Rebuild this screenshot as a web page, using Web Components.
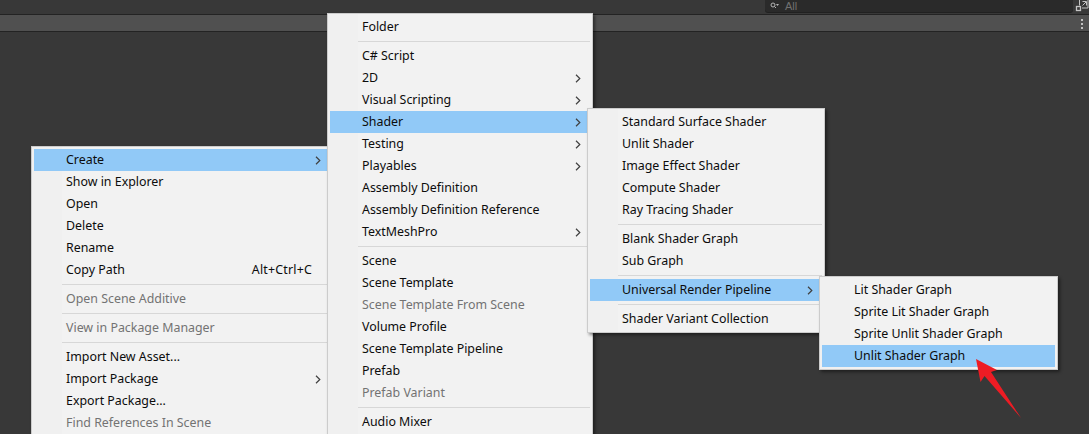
<!DOCTYPE html>
<html>
<head>
<meta charset="utf-8">
<style>
  html, body { margin: 0; height: 100%; background: #383838; overflow: hidden; }
  body { font-family: "Noto Sans", "Liberation Sans", sans-serif; }
</style>
</head>
<body>
<editor-bar></editor-bar>

<context-menu style="left:31px;top:146px;width:302px;z-index:1">
  <menu-row arrow active>Create</menu-row>
  <menu-row>Show in Explorer</menu-row>
  <menu-row>Open</menu-row>
  <menu-row>Delete</menu-row>
  <menu-row>Rename</menu-row>
  <menu-row key="Alt+Ctrl+C">Copy Path</menu-row>
  <menu-sep></menu-sep>
  <menu-row off>Open Scene Additive</menu-row>
  <menu-sep></menu-sep>
  <menu-row off>View in Package Manager</menu-row>
  <menu-sep></menu-sep>
  <menu-row>Import New Asset...</menu-row>
  <menu-row arrow>Import Package</menu-row>
  <menu-row>Export Package...</menu-row>
  <menu-row off>Find References In Scene</menu-row>
</context-menu>

<context-menu style="left:327px;top:13px;width:266px;z-index:2">
  <menu-row>Folder</menu-row>
  <menu-sep></menu-sep>
  <menu-row>C# Script</menu-row>
  <menu-row arrow>2D</menu-row>
  <menu-row arrow>Visual Scripting</menu-row>
  <menu-row arrow active>Shader</menu-row>
  <menu-row arrow>Testing</menu-row>
  <menu-row arrow>Playables</menu-row>
  <menu-row>Assembly Definition</menu-row>
  <menu-row>Assembly Definition Reference</menu-row>
  <menu-row arrow>TextMeshPro</menu-row>
  <menu-sep></menu-sep>
  <menu-row>Scene</menu-row>
  <menu-row>Scene Template</menu-row>
  <menu-row off>Scene Template From Scene</menu-row>
  <menu-row>Volume Profile</menu-row>
  <menu-row>Scene Template Pipeline</menu-row>
  <menu-row>Prefab</menu-row>
  <menu-row off>Prefab Variant</menu-row>
  <menu-sep></menu-sep>
  <menu-row>Audio Mixer</menu-row>
</context-menu>

<context-menu style="left:587px;top:108px;width:238px;z-index:3">
  <menu-row>Standard Surface Shader</menu-row>
  <menu-row>Unlit Shader</menu-row>
  <menu-row>Image Effect Shader</menu-row>
  <menu-row>Compute Shader</menu-row>
  <menu-row>Ray Tracing Shader</menu-row>
  <menu-sep></menu-sep>
  <menu-row>Blank Shader Graph</menu-row>
  <menu-row>Sub Graph</menu-row>
  <menu-sep></menu-sep>
  <menu-row arrow active>Universal Render Pipeline</menu-row>
  <menu-sep></menu-sep>
  <menu-row>Shader Variant Collection</menu-row>
</context-menu>

<context-menu style="left:819px;top:276px;width:239px;z-index:4">
  <menu-row>Lit Shader Graph</menu-row>
  <menu-row>Sprite Lit Shader Graph</menu-row>
  <menu-row>Sprite Unlit Shader Graph</menu-row>
  <menu-row active>Unlit Shader Graph</menu-row>
</context-menu>

<red-arrow></red-arrow>

<script>
// barra oscura de arriba con el buscador
class EditorBar extends HTMLElement {
  constructor() {
    super();
    this.attachShadow({ mode: 'open' });
    this.shadowRoot.innerHTML = `
      <style>
        :host { display: block; }
        .top { height: 14px; display: flex; justify-content: flex-end; background: #383838; border-bottom: 1px solid #232323; }
        .search { width: 308px; height: 12px; margin-right: 16px; box-sizing: border-box; background: #2a2a2a; border-radius: 0 0 3px 3px; box-shadow: 0 1px 0 #212121;
          display: flex; align-items: flex-start; gap: 6px; padding-left: 5px; color: #707070; font: 11px "Liberation Sans", sans-serif; }
        .search svg { margin-top: 2px; }
        .tool { height: 16px; background: #505050; border-bottom: 1px solid #232323; display: flex; justify-content: flex-end; align-items: center; padding-right: 6px; }
        .dots { display: flex; flex-direction: column; gap: 2px; margin-top: 1px; }
        .dots i { display: block; width: 2px; height: 2px; background: #c0c0c0; }
        .layers { position: absolute; right: 0; top: 0; }
      </style>
      <div class="top">
        <div class="search">
          <svg width="9" height="7" viewBox="0 0 9 7" fill="none" stroke="#b4b4b4">
            <circle cx="3" cy="3" r="2"/><path d="M4.500 4.500 6 6"/><path fill="#b4b4b4" stroke="none" d="M6 2h3L7.500 4z"/>
          </svg>
          <span>All</span>
        </div>
      </div>
      <div class="tool"><div class="dots"><i></i><i></i><i></i></div></div>
      <svg class="layers" width="14" height="12" viewBox="0 0 14 12" fill="none" stroke="#c4c4c4">
        <path d="M4.500 5.500v-6h8.500v8.500h-6M7.500 5.500l3.500-3.500M7.500 1.500h4v4"/><rect x="1.500" y="6.500" width="4" height="4" stroke-width="1.300"/>
      </svg>
    `;
  }
}
customElements.define('editor-bar', EditorBar);

// caja del menu, se coloca encima del resto
class ContextMenu extends HTMLElement {
  constructor() {
    super();
    this.attachShadow({ mode: 'open' });
    this.shadowRoot.innerHTML = `
      <style>
        :host { display: block; position: absolute; box-sizing: border-box; padding: 2px; background: #f2f2f2;
          border: 1px solid #cccccc; box-shadow: 2px 2px 3px rgba(0,0,0,.45); }
        .gutter { position: absolute; left: 0; top: 0; bottom: 0; width: 30px; background: #f0f0f0; }
        .rows { position: relative; }
      </style>
      <div class="gutter"></div>
      <div class="rows"><slot></slot></div>
    `;
  }
}
customElements.define('context-menu', ContextMenu);

class MenuRow extends HTMLElement {
  constructor() {
    super();
    this.attachShadow({ mode: 'open' });
    const key = this.getAttribute('key');
    this.shadowRoot.innerHTML = `
      <style>
        :host { display: flex; align-items: center; height: 22px; padding: 0 9px 0 32px; font-size: 12.400px; color: #0c0c0c; white-space: nowrap; }
        :host([active]) { background: #91c9f7; }
        :host([off]) { color: #737373; }
        .label { flex: 1; position: relative; top: -1px; }
        .key { position: relative; top: -1px; margin-right: 9px; letter-spacing: .2px; }
        svg { display: block; }
      </style>
      <span class="label"><slot></slot></span>
      ${key ? `<span class="key">${key}</span>` : ''}
      ${this.hasAttribute('arrow') ? `<svg width="6" height="9" viewBox="0 0 6 9" fill="none" stroke="#404040" stroke-width="1.200"><path d="M1 .8 4.800 4.500 1 8.200"/></svg>` : ''}
    `;
  }
}
customElements.define('menu-row', MenuRow);

class MenuSep extends HTMLElement {
  constructor() {
    super();
    this.attachShadow({ mode: 'open' });
    this.shadowRoot.innerHTML = `
      <style>
        :host { display: block; height: 7px; padding: 3px 0 0 28px; box-sizing: border-box; }
        div { height: 1px; background: #d7d7d7; }
      </style>
      <div></div>
    `;
  }
}
customElements.define('menu-sep', MenuSep);

// flecha roja de la anotacion
class RedArrow extends HTMLElement {
  constructor() {
    super();
    this.attachShadow({ mode: 'open' });
    this.shadowRoot.innerHTML = `
      <style>
        :host { display: block; position: absolute; left: 970px; top: 355px; z-index: 5; }
        svg { display: block; }
      </style>
      <svg width="56" height="66" viewBox="970 355 56 66">
        <path fill="#ed1c24" d="M976 359 997 370 991 372 1021 418 984.500 376 980.500 382Z"/>
      </svg>
    `;
  }
}
customElements.define('red-arrow', RedArrow);
</script>
</body>
</html>
